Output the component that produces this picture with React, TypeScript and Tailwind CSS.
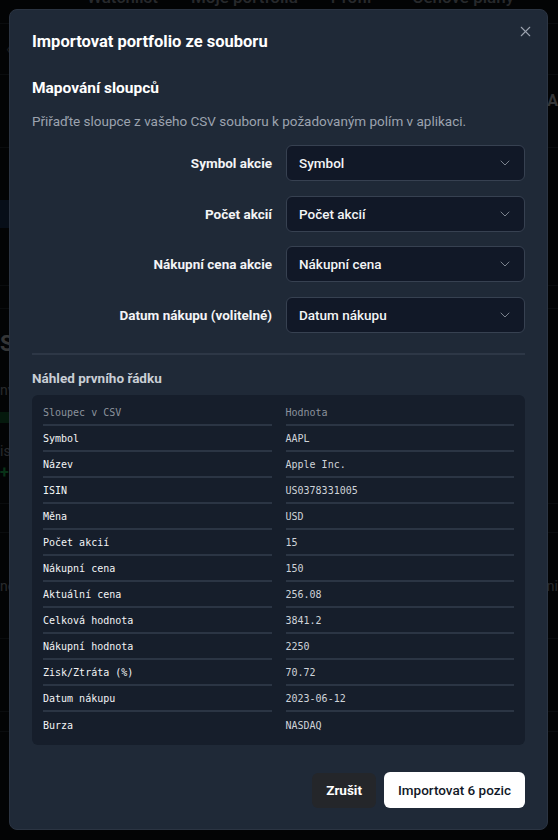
import { X, ChevronDown } from "lucide-react";

const mappings = [
  { label: "Symbol akcie", value: "Symbol" },
  { label: "Počet akcií", value: "Počet akcií" },
  { label: "Nákupní cena akcie", value: "Nákupní cena" },
  { label: "Datum nákupu (volitelné)", value: "Datum nákupu" },
];

const preview: [string, string][] = [
  ["Symbol", "AAPL"],
  ["Název", "Apple Inc."],
  ["ISIN", "US0378331005"],
  ["Měna", "USD"],
  ["Počet akcií", "15"],
  ["Nákupní cena", "150"],
  ["Aktuální cena", "256.08"],
  ["Celková hodnota", "3841.2"],
  ["Nákupní hodnota", "2250"],
  ["Zisk/Ztráta (%)", "70.72"],
  ["Datum nákupu", "2023-06-12"],
  ["Burza", "NASDAQ"],
];

function PageBehind() {
  return (
    <div className="h-[840px] overflow-hidden bg-[#0d1014] text-[#e5e7eb] font-['Roboto',sans-serif]">
      {/* top navigation, scrolled partly out of view */}
      <div className="h-[24px] border-b border-[#2a3038] flex items-start gap-[33px] pl-[87px] text-[17px] font-medium text-[#9ca3af]">
        <span className="leading-[18px] -mt-[12px]">Watchlist</span>
        <span className="leading-[18px] -mt-[12px]">Moje portfolia</span>
        <span className="leading-[18px] -mt-[12px]">Profil</span>
        <span className="leading-[18px] -mt-[12px] ml-[8px]">Cenové plány</span>
      </div>
      <div className="h-[51px] border-b border-[#2a3038] flex items-center pl-[6px] text-[#6b7280]">‹</div>
      <div className="h-[73px] border-b border-[#2a3038] flex items-start justify-end pt-[14px] font-bold text-[#d1d5db]">A</div>
      <div className="h-[52px]" />
      <div className="h-[28px] bg-[#1e3a5f] w-[40px]" />
      <div className="h-[58px] border-b border-[#2a3038]" />
      <div className="h-[23px] border-b border-[#2a3038]" />
      <div className="pt-[18px] text-[22px] font-bold text-[#d1d5db]">Sc</div>
      <div className="pt-[20px] text-sm text-[#9ca3af]">nv</div>
      <div className="mt-[12px] h-[11px] w-[40px] bg-[#166534]" />
      <div className="pt-[18px] text-sm text-[#9ca3af]">is</div>
      <div className="text-[#22c55e] font-bold">+I</div>
      <div className="mt-[18px] h-[30px] border-y border-[#2a3038]" />
      <div className="h-[106px] border-b border-[#2a3038] flex items-center justify-between text-sm text-[#9ca3af]">
        <span>no</span>
        <span>ni</span>
      </div>
      <div className="h-[73px] border-b border-[#2a3038]" />
      <div className="h-[20px] border-b border-[#2a3038]" />
    </div>
  );
}

function SelectBox({ value }: { value: string }) {
  return (
    <div className="w-[239px] h-9 rounded-md border border-[#374151] bg-[#111827] flex items-center justify-between pl-3 pr-[11px] text-[13.5px] font-medium text-[#f3f4f6]">
      <span>{value}</span>
      <ChevronDown className="w-4 h-4 text-[#7b828d]" strokeWidth={1.5} />
    </div>
  );
}

export default function App() {
  return (
    <div className="relative w-[558px] h-[840px] overflow-hidden">
      <PageBehind />

      <div className="absolute inset-0 bg-black/75 flex items-start justify-start p-[9px] font-['Roboto',sans-serif]">
        <div className="relative w-[539px] h-[821px] rounded-lg border border-[#2b3442] bg-[#1f2937] px-[22px] pt-[20px] flex flex-col text-white">
          <button className="absolute right-[13px] top-[13px] text-[#9ca3af]">
            <X className="w-[17px] h-[17px]" strokeWidth={1.5} />
          </button>

          <h2 className="text-[16.5px] leading-6 font-bold">Importovat portfolio ze souboru</h2>

          <h3 className="mt-[22px] text-[15.5px] leading-6 font-bold">Mapování sloupců</h3>
          <p className="mt-[11px] text-[13.5px] leading-5 text-[#9ca3af]">
            Přiřaďte sloupce z vašeho CSV souboru k požadovaným polím v aplikaci.
          </p>

          <div className="mt-[14px] flex flex-col gap-[14.7px]">
            {mappings.map((m) => (
              <div key={m.label} className="flex items-center gap-[14px]">
                <label className="flex-1 text-right text-[13.5px] font-bold text-[#f3f4f6]">{m.label}</label>
                <SelectBox value={m.value} />
              </div>
            ))}
          </div>

          <div className="mt-[20px] h-[2px] bg-[#2d3746]" />

          <h4 className="mt-[13px] text-[13.5px] leading-5 font-bold text-[#c9ced5]">Náhled prvního řádku</h4>

          <div className="mt-[7px] rounded-md bg-[#161e2b] px-[11px] pt-[5px] pb-[7px] font-['DejaVu_Sans_Mono',monospace] text-[10px]">
            <div className="grid grid-cols-2 gap-x-[14px]">
              <div className="h-[26px] border-b-2 border-[#2b3544] flex items-center text-[#8b929c]">Sloupec v CSV</div>
              <div className="h-[26px] border-b-2 border-[#2b3544] flex items-center text-[#8b929c]">Hodnota</div>
              {preview.map(([col, val], i) => {
                const last = i === preview.length - 1;
                const line = last ? "" : "border-b-2 border-[#2b3544]";
                return [
                  <div key={col} className={`h-[26px] flex items-center text-[#f3f4f6] ${line}`}>{col}</div>,
                  <div key={col + "-v"} className={`h-[26px] flex items-center text-[#cfd3d9] ${line}`}>{val}</div>,
                ];
              })}
            </div>
          </div>

          <div className="mt-auto mb-[21px] flex justify-end items-center gap-[8px]">
            <button className="h-[35px] px-[14px] rounded-md bg-[#24262a] text-[13.5px] font-bold text-white">Zrušit</button>
            <button className="h-9 px-[14px] rounded-md bg-white text-[13.5px] font-medium text-[#111827]">Importovat 6 pozic</button>
          </div>
        </div>
      </div>
    </div>
  );
}
